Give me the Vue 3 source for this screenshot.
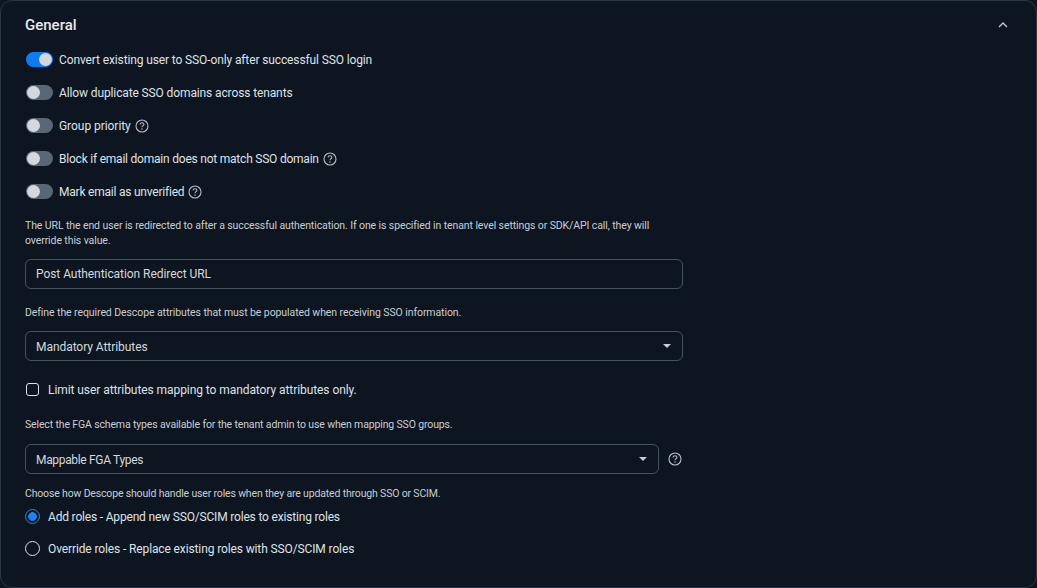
<script setup>
const toggles = [
  { label: 'Convert existing user to SSO-only after successful SSO login', on: true, help: false, fit: '' },
  { label: 'Allow duplicate SSO domains across tenants', on: false, help: false, fit: '' },
  { label: 'Group priority', on: false, help: true, fit: 'loose' },
  { label: 'Block if email domain does not match SSO domain', on: false, help: true, fit: 'tight' },
  { label: 'Mark email as unverified', on: false, help: true, fit: 'tight' }
]
</script>

<template>
  <section class="card">
    <header class="head">
      <h2 class="title">General</h2>
      <svg class="chev" width="12" height="8" viewBox="0 0 12 8" fill="none"><path d="M2 6 L6 2 L10 6" stroke="#c3cad3" stroke-width="1.4" /></svg>
    </header>

    <div class="toggles">
      <div v-for="t in toggles" :key="t.label" class="toggle-row">
        <span class="switch" :class="{ on: t.on }"><span class="knob"></span></span>
        <span class="label" :class="t.fit">{{ t.label }}</span>
        <svg v-if="t.help" class="help" width="14" height="14" viewBox="0 0 14 14" fill="none">
          <circle cx="7" cy="7" r="6" stroke="#b6bdc6" stroke-width="1.1" />
          <path d="M5.1 5.5 C5.1 4.4 6 3.7 7 3.7 C8 3.7 8.9 4.4 8.9 5.4 C8.9 6.7 7 6.7 7 8.3" stroke="#b6bdc6" stroke-width="1.1" />
          <circle cx="7" cy="10.1" r=".75" fill="#b6bdc6" />
        </svg>
      </div>
    </div>

    <p class="desc first">The URL the end user is redirected to after a successful authentication. If one is specified in tenant level settings or SDK/API call, they will<br>override this value.</p>
    <div class="field wide"><span>Post Authentication Redirect URL</span></div>

    <p class="desc second">Define the required Descope attributes that must be populated when receiving SSO information.</p>
    <div class="field wide select"><span>Mandatory Attributes</span><i class="caret"></i></div>

    <div class="check-row">
      <span class="check"></span>
      <span class="label limit">Limit user attributes mapping to mandatory attributes only.</span>
    </div>

    <p class="desc third">Select the FGA schema types available for the tenant admin to use when mapping SSO groups.</p>
    <div class="field-row">
      <div class="field narrow select"><span class="fga">Mappable FGA Types</span><i class="caret"></i></div>
      <svg class="help" width="14" height="14" viewBox="0 0 14 14" fill="none">
        <circle cx="7" cy="7" r="6" stroke="#b6bdc6" stroke-width="1.1" />
        <path d="M5.1 5.5 C5.1 4.4 6 3.7 7 3.7 C8 3.7 8.9 4.4 8.9 5.4 C8.9 6.7 7 6.7 7 8.3" stroke="#b6bdc6" stroke-width="1.1" />
        <circle cx="7" cy="10.1" r=".75" fill="#b6bdc6" />
      </svg>
    </div>

    <p class="desc fourth">Choose how Descope should handle user roles when they are updated through SSO or SCIM.</p>
    <div class="radio-row">
      <span class="radio selected"></span>
      <span class="label add">Add roles - Append new SSO/SCIM roles to existing roles</span>
    </div>
    <div class="radio-row second-radio">
      <span class="radio"></span>
      <span class="label">Override roles - Replace existing roles with SSO/SCIM roles</span>
    </div>
  </section>
</template>

<style>
html, body { margin: 0; background: #0d1520; }
</style>

<style scoped>
.card {
  box-sizing: border-box;
  width: 1037px;
  height: 588px;
  overflow: hidden;
  padding: 0 24px;
  background: #0d1520;
  border: 1px solid #2b3644;
  border-radius: 12px;
  font-family: Roboto, "Liberation Sans", sans-serif;
  color: #e4e7eb;
}
.head {
  display: flex;
  align-items: center;
  justify-content: space-between;
  height: 48px;
  padding-right: 3px;
}
.title { margin: 0; font-size: 15px; font-weight: 500; color: #e8ebee; }
.chev { display: block; }
.toggles { margin-top: -6px; }
.toggle-row { display: flex; align-items: center; height: 33px; }
.switch {
  flex: none;
  display: flex;
  align-items: center;
  width: 27px;
  height: 15px;
  margin-left: 1px;
  margin-right: 6px;
  padding: 0 1px;
  box-sizing: border-box;
  border-radius: 8px;
  background: #5b6675;
}
.switch.on { background: #0e7bf0; justify-content: flex-end; }
.knob { width: 13px; height: 13px; border-radius: 50%; background: #d3d8df; }
.label { font-size: 12px; color: #dfe3e8; letter-spacing: -.12px; white-space: nowrap; }
.label.tight { letter-spacing: -.22px; }
.label.loose { letter-spacing: -.05px; }
.label.limit { letter-spacing: -.07px; position: relative; top: .5px; }
.label.add { letter-spacing: -.18px; }
.help { flex: none; margin-left: 4px; }
.desc { margin: 0; font-size: 10.5px; line-height: 15px; color: #c9ced5; letter-spacing: -.085px; }
.desc.first { margin-top: 10px; letter-spacing: -.1px; }
.desc.second { margin-top: 16px; }
.desc.third { margin-top: 20px; letter-spacing: -.14px; }
.desc.fourth { margin-top: 12px; letter-spacing: -.165px; }
.field {
  box-sizing: border-box;
  display: flex;
  align-items: center;
  justify-content: space-between;
  height: 30px;
  padding: 0 11px 0 10px;
  border: 1px solid #48525f;
  border-radius: 6px;
  font-size: 12px;
  color: #d5d9df;
  letter-spacing: -.06px;
}
.field span { position: relative; top: -.5px; }
.field.select span { top: .5px; }
.field .fga { letter-spacing: -.33px; }
.wide { width: 658px; margin-top: 11px; }
.narrow { width: 634px; }
.field-row { display: flex; align-items: center; margin-top: 12px; }
.field-row .help { margin-left: 9px; }
.caret {
  width: 0;
  height: 0;
  border-left: 4px solid transparent;
  border-right: 4px solid transparent;
  border-top: 4px solid #c6ccd4;
}
.check-row { display: flex; align-items: center; gap: 9px; margin-top: 20px; height: 16px; }
.check {
  box-sizing: border-box;
  width: 13px;
  height: 13px;
  margin-left: 1px;
  border: 1.5px solid #dfe3e8;
  border-radius: 3px;
}
.radio-row { display: flex; align-items: center; gap: 8px; height: 31px; }
.second-radio { margin-top: 1px; }
.radio {
  box-sizing: border-box;
  width: 15px;
  height: 15px;
  border: 1.5px solid #dfe3e8;
  border-radius: 50%;
}
.radio.selected {
  border-color: #2d87e6;
  background: radial-gradient(circle, #1a84f5 0 4px, transparent 4.6px);
}
</style>
